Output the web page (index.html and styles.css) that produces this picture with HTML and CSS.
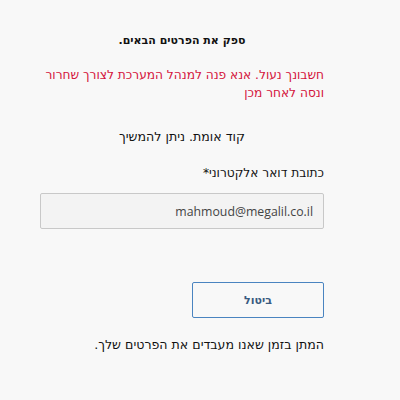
FILE: index.html
```html
<!DOCTYPE html>
<html lang="he" dir="rtl">
<head>
    <meta charset="UTF-8">
    <title>אימות</title>
    <link rel="stylesheet" href="styles.css">
</head>
<body>

<div class="container">
    <h3 class="title">ספק את הפרטים הבאים.</h3>

    <p class="error">חשבונך נעול. אנא פנה למנהל המערכת לצורך שחרור ונסה לאחר מכן</p>

    <p class="verified">קוד אומת. ניתן להמשיך</p>

    <label for="email">כתובת דואר אלקטרוני*</label>
    <input type="text" id="email" value="mahmoud@megalil.co.il" dir="ltr" readonly>

    <div class="actions">
        <button class="btn-cancel">ביטול</button>
    </div>

    <p class="wait">המתן בזמן שאנו מעבדים את הפרטים שלך.</p>
</div>

</body>
</html>
```

FILE: styles.css
```css
body {
    font-family: "DejaVu Sans", sans-serif;
    background-color: #f8f8f8;
    color: #111;
    margin: 0;
    padding: 0;
}
.container {
    width: 284px;
    margin-right: 76px;
    padding-top: 33px;
}
.title {
    font-size: 11px;
    font-weight: bold;
    text-align: center;
    margin: 0;
    line-height: 16px;
}
.error {
    color: #d4143c;
    font-size: 12.2px;
    line-height: 18px;
    margin: 17px 0 0;
}
.verified {
    font-size: 12.6px;
    line-height: 18px;
    text-align: center;
    margin: 26px 0 0;
}
label {
    display: block;
    font-size: 12.2px;
    line-height: 18px;
    margin-top: 18px;
}
input {
    display: block;
    box-sizing: border-box;
    width: 100%;
    height: 36px;
    margin-top: 11px;
    padding: 0 10px;
    border: 1px solid #c8c8c8;
    border-radius: 2px;
    background: #f3f3f3;
    color: #444;
    font-family: "Open Sans", sans-serif;
    font-size: 12.3px;
    text-align: right;
}
.actions {
    margin-top: 53px;
}
.btn-cancel {
    box-sizing: border-box;
    width: 132px;
    height: 36px;
    border: 1px solid #4a84c0;
    border-radius: 2px;
    background: #f8f8f8;
    color: #3a5a80;
    font-family: "DejaVu Sans", sans-serif;
    font-size: 11px;
    font-weight: bold;
    cursor: pointer;
}
.wait {
    font-size: 12.6px;
    line-height: 18px;
    margin: 18px 0 0;
}
```
